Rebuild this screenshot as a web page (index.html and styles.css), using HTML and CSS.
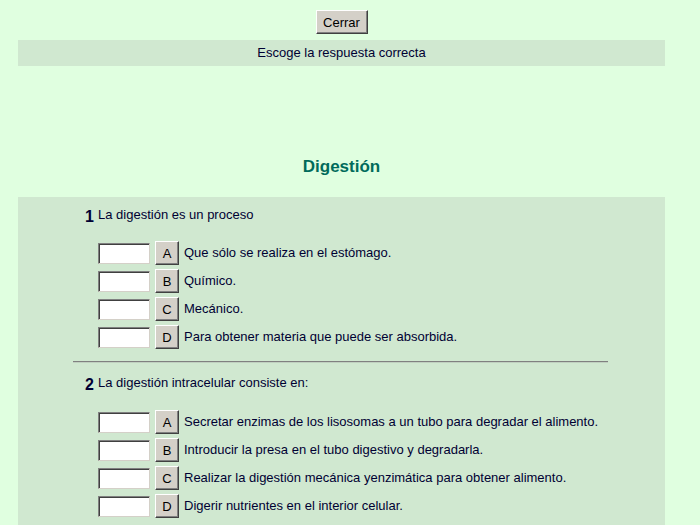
FILE: index.html
```html
<!DOCTYPE html>
<html lang="es">
<head>
<meta charset="utf-8">
<title>Digestión</title>
<link rel="stylesheet" href="styles.css">
</head>
<body>
<div class="top"><button class="btn close">Cerrar</button></div>
<div class="band">Escoge la respuesta correcta</div>
<h2 class="title">Digestión</h2>
<div class="main">
  <div class="question">
    <div class="qline"><span class="num">1</span><span class="qtext">La digestión es un proceso</span></div>
    <div class="answers">
      <div class="row"><input class="box" type="text"><button class="btn letter">A</button><span class="atext">Que sólo se realiza en el estómago.</span></div>
      <div class="row"><input class="box" type="text"><button class="btn letter">B</button><span class="atext">Químico.</span></div>
      <div class="row"><input class="box" type="text"><button class="btn letter">C</button><span class="atext">Mecánico.</span></div>
      <div class="row"><input class="box" type="text"><button class="btn letter">D</button><span class="atext">Para obtener materia que puede ser absorbida.</span></div>
    </div>
  </div>
  <div class="rule"></div>
  <div class="question">
    <div class="qline"><span class="num">2</span><span class="qtext">La digestión intracelular consiste en:</span></div>
    <div class="answers">
      <div class="row"><input class="box" type="text"><button class="btn letter">A</button><span class="atext">Secretar enzimas de los lisosomas a un tubo para degradar el alimento.</span></div>
      <div class="row"><input class="box" type="text"><button class="btn letter">B</button><span class="atext">Introducir la presa en el tubo digestivo y degradarla.</span></div>
      <div class="row"><input class="box" type="text"><button class="btn letter">C</button><span class="atext">Realizar la digestión mecánica yenzimática para obtener alimento.</span></div>
      <div class="row"><input class="box" type="text"><button class="btn letter">D</button><span class="atext">Digerir nutrientes en el interior celular.</span></div>
    </div>
  </div>
</div>
</body>
</html>
```
FILE: styles.css
```css
* { box-sizing: border-box; }
html, body { margin: 0; padding: 0; }
body {
  background: #e0ffe0;
  font-family: "Liberation Sans", Arial, sans-serif;
  font-size: 13px;
  color: #000033;
  padding-top: 10px;
  height: 525px;
  overflow: hidden;
}
.top {
  margin: 0 35px 0 18px;
  display: flex;
  justify-content: center;
}
.btn {
  font-family: "Liberation Sans", Arial, sans-serif;
  font-size: 13px;
  color: #000000;
  background: #d4d0c8;
  border: 1px solid;
  border-color: #ffffff #404040 #404040 #ffffff;
  box-shadow: inset -1px -1px 0 #808080;
  padding: 0;
  margin: 0;
}
.close {
  width: 52px;
  height: 24px;
}
.band {
  margin: 6px 35px 0 18px;
  height: 26px;
  line-height: 26px;
  background: #d0e8d0;
  text-align: center;
}
.title {
  margin: 91px 35px 0 18px;
  height: 20px;
  line-height: 20px;
  font-size: 17px;
  font-weight: bold;
  color: #006b5b;
  text-align: center;
}
.main {
  margin: 20px 35px 0 18px;
  background: #d0e8d0;
  padding-top: 8px;
  padding-bottom: 20px;
}
.question {
  display: flex;
  flex-direction: column;
}
.qline {
  height: 18px;
  line-height: 18px;
  padding-left: 67px;
  display: flex;
  align-items: baseline;
}
.num {
  font-size: 16px;
  font-weight: bold;
  width: 13px;
  position: relative;
  top: 3px;
}
.answers {
  margin-top: 18px;
  padding-left: 80px;
  display: flex;
  flex-direction: column;
  gap: 4px;
}
.rule + .question .answers {
  margin-top: 19px;
}
.row {
  height: 24px;
  display: flex;
  align-items: center;
}
.box {
  width: 52px;
  height: 21px;
  background: #ffffff;
  border: 1px solid;
  border-color: #808080 #d4d0c8 #d4d0c8 #808080;
  box-shadow: inset 1px 1px 0 #404040, inset -1px -1px 0 #ffffff;
  padding: 0;
  margin: 0;
  outline: none;
}
.letter {
  width: 24px;
  height: 24px;
  margin-left: 5px;
}
.atext {
  margin-left: 5px;
  line-height: 24px;
}
.rule {
  margin: 12px 57px 10px 55px;
  height: 2px;
  border-top: 1px solid #808080;
  border-bottom: 1px solid #c0d0c0;
}
```
